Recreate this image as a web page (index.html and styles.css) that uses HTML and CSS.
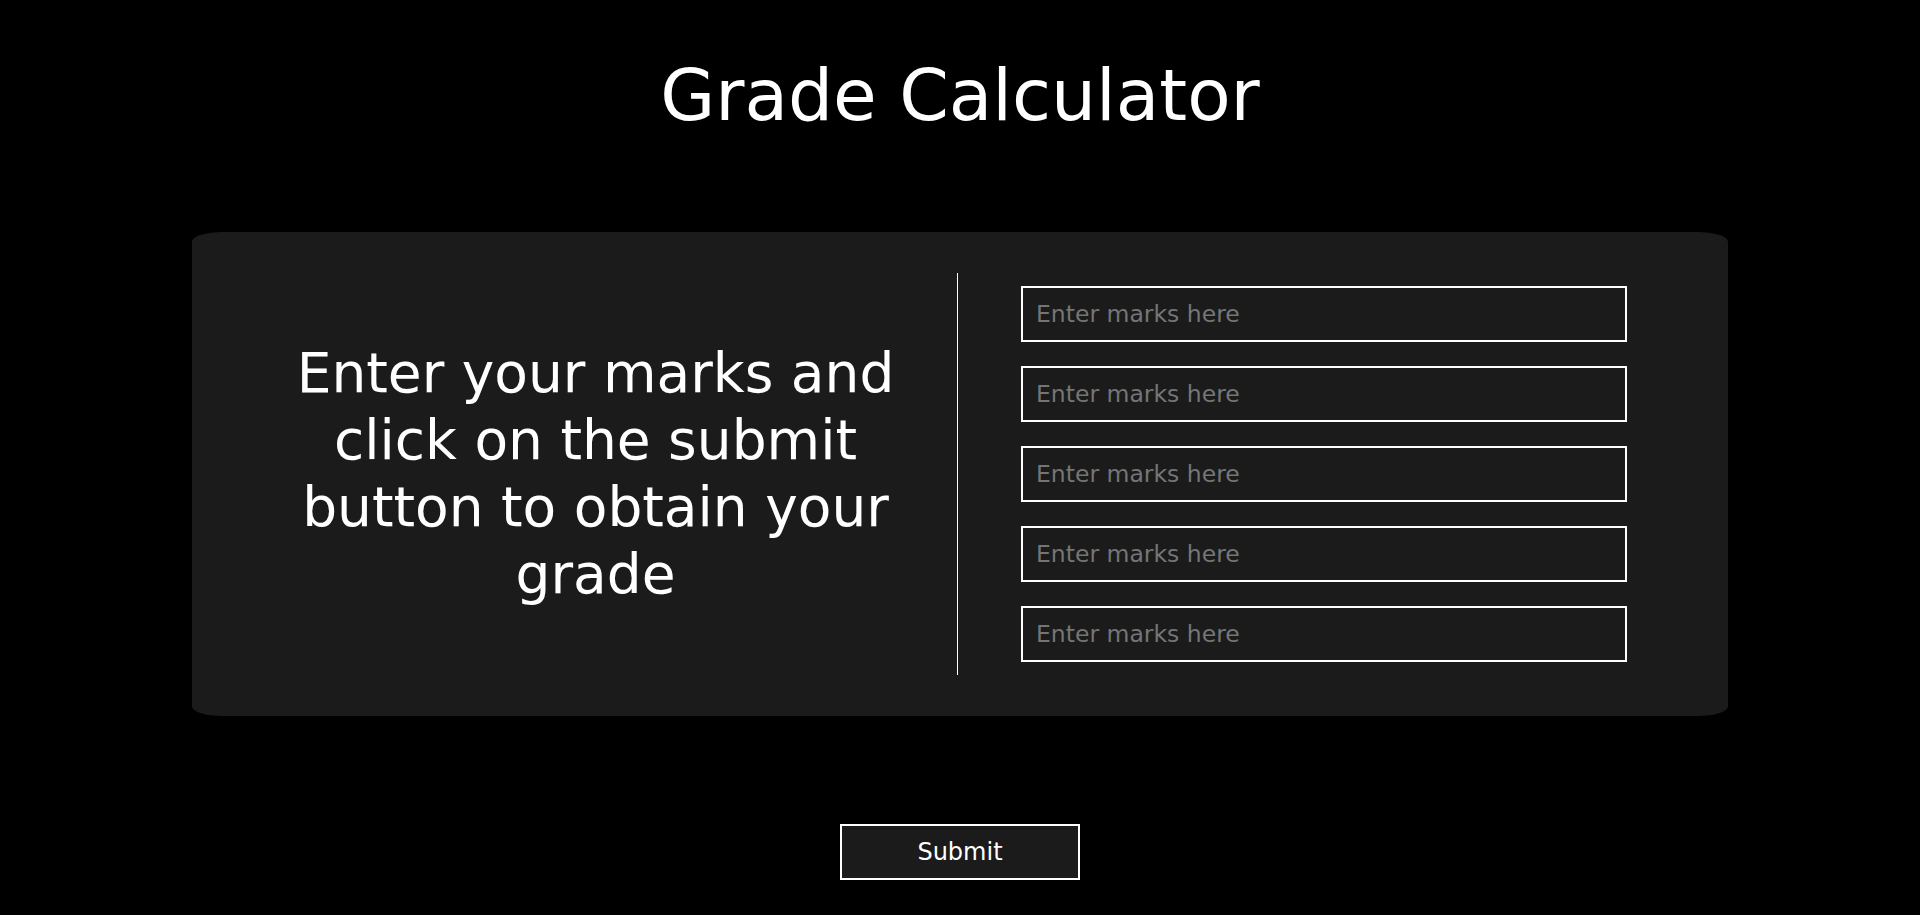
FILE: index.html
```html
<!DOCTYPE html>
<html lang="en">
<head>
<meta charset="utf-8">
<title>Grade Calculator</title>
<link rel="stylesheet" href="styles.css">
</head>
<body>
  <header class="header">
    <h1 class="title">Grade Calculator</h1>
  </header>
  <main class="card">
    <div class="intro">
      <p class="intro-text">Enter your marks and click on the submit button to obtain your grade</p>
    </div>
    <div class="divider"></div>
    <form class="marks">
      <input class="mark-input" type="text" placeholder="Enter marks here">
      <input class="mark-input" type="text" placeholder="Enter marks here">
      <input class="mark-input" type="text" placeholder="Enter marks here">
      <input class="mark-input" type="text" placeholder="Enter marks here">
      <input class="mark-input" type="text" placeholder="Enter marks here">
    </form>
  </main>
  <div class="actions">
    <button class="submit-btn" type="button">Submit</button>
  </div>
</body>
</html>
```

FILE: styles.css
```css
* {
  box-sizing: border-box;
}

html, body {
  margin: 0;
  padding: 0;
  background: #000;
}

body {
  font-family: "DejaVu Sans", "Liberation Sans", sans-serif;
  color: #fff;
  min-height: 915px;
}

.header {
  padding-top: 60px;
  margin-bottom: 101px;
  text-align: center;
}

.title {
  margin: 0;
  font-size: 71px;
  line-height: 71px;
  font-weight: normal;
  color: #fff;
}

.card {
  width: 1536px;
  margin: 0 auto;
  background: #1b1b1b;
  border-radius: 2%;
  padding: 41px 42px;
  display: flex;
  align-items: stretch;
}

.intro {
  flex: 0 0 723px;
  display: flex;
  align-items: center;
  justify-content: center;
}

.intro-text {
  margin: 0;
  max-width: 640px;
  text-align: center;
  font-size: 55px;
  line-height: 67px;
  color: #fff;
}

.divider {
  flex: 0 0 1px;
  background: #fff;
}

.marks {
  flex: 1;
  margin: 0;
  padding: 13px 0 13px 63px;
  display: flex;
  flex-direction: column;
  gap: 24px;
}

.mark-input {
  width: 606px;
  height: 56px;
  background: #1b1b1b;
  border: 2px solid #fff;
  border-radius: 0;
  padding: 0 13px;
  font-family: "DejaVu Sans", "Liberation Sans", sans-serif;
  font-size: 23.5px;
  color: #fff;
  outline: none;
}

.mark-input::placeholder {
  color: #757575;
}

.actions {
  margin-top: 108px;
  display: flex;
  justify-content: center;
}

.submit-btn {
  width: 240px;
  height: 56px;
  background: #1b1b1b;
  border: 2px solid #fff;
  border-radius: 0;
  color: #fff;
  font-family: "DejaVu Sans", "Liberation Sans", sans-serif;
  font-size: 24px;
  cursor: pointer;
}
```
